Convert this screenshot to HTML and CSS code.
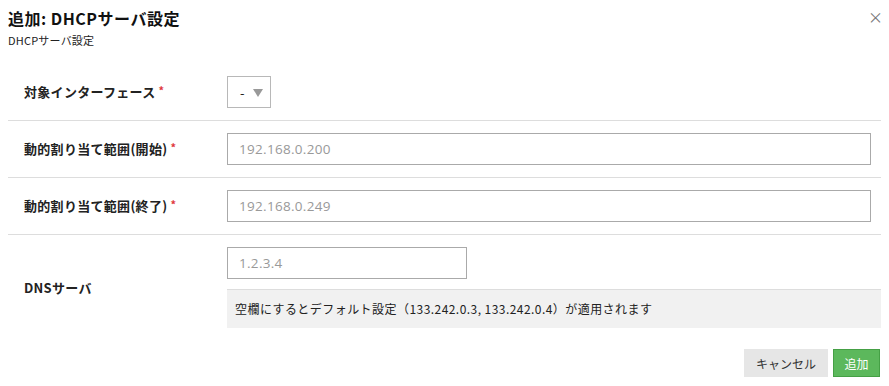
FILE: index.html
```html
<!DOCTYPE html>
<html lang="ja">
<head>
<meta charset="utf-8">
<title>追加: DHCPサーバ設定</title>
<link rel="stylesheet" href="styles.css">
</head>
<body>
<div class="dialog">
  <div class="header">
    <div class="titles">
      <h1 class="title">追加: DHCPサーバ設定</h1>
      <div class="subtitle">DHCPサーバ設定</div>
    </div>
    <span class="close">×</span>
  </div>
  <div class="form">
    <div class="row">
      <div class="label">対象インターフェース<span class="req">*</span></div>
      <div class="field">
        <div class="select"><span class="sel-val">-</span><span class="caret"></span></div>
      </div>
    </div>
    <div class="row">
      <div class="label">動的割り当て範囲(開始)<span class="req">*</span></div>
      <div class="field"><div class="input wide">192.168.0.200</div></div>
    </div>
    <div class="row">
      <div class="label">動的割り当て範囲(終了)<span class="req">*</span></div>
      <div class="field"><div class="input wide">192.168.0.249</div></div>
    </div>
    <div class="row last">
      <div class="label">DNSサーバ</div>
      <div class="field">
        <div class="input short">1.2.3.4</div>
        <div class="hint">空欄にするとデフォルト設定（133.242.0.3, 133.242.0.4）が適用されます</div>
      </div>
    </div>
  </div>
  <div class="footer">
    <button class="btn cancel">キャンセル</button>
    <button class="btn ok">追加</button>
  </div>
</div>
</body>
</html>
```
FILE: styles.css
```css
* { box-sizing: border-box; }
body {
  margin: 8px;
  font-family: "Noto Sans CJK JP", "Noto Sans", sans-serif;
  color: #222;
  background: #fff;
}
.dialog { width: 873px; }
.header {
  display: flex;
  justify-content: space-between;
  align-items: flex-start;
  height: 56px;
}
.title {
  margin: 0;
  font-size: 16px;
  font-weight: bold;
  line-height: 20px;
  letter-spacing: 0.5px;
  color: #111;
}
.subtitle {
  font-size: 11px;
  line-height: 16px;
  margin-top: 4px;
  letter-spacing: 0.2px;
  color: #222;
}
.close {
  font-size: 15px;
  color: #777;
  line-height: 14px;
  margin-top: 2px;
  margin-right: -2px;
}
.row {
  display: flex;
  align-items: center;
  padding: 12px 0;
  border-bottom: 1px solid #ddd;
}
.row.last { border-bottom: none; padding-bottom: 21px; }
.label {
  width: 219px;
  padding-left: 16px;
  font-size: 13px;
  font-weight: bold;
  color: #222;
  line-height: 18px;
  letter-spacing: 0.3px;
}
.req {
  color: #e0393e;
  font-size: 11px;
  margin-left: 3px;
  position: relative;
  top: -2px;
}
.field { flex: 1; }
.select {
  width: 44px;
  height: 32px;
  border: 1px solid #b8b8b8;
  display: flex;
  align-items: center;
  padding-left: 12px;
  font-size: 13px;
}
.sel-val { color: #222; }
.caret {
  width: 0; height: 0;
  margin-left: 8px;
  margin-top: 2px;
  border-left: 5px solid transparent;
  border-right: 5px solid transparent;
  border-top: 8px solid #999;
}
.input {
  height: 32px;
  border: 1px solid #aaa;
  font-size: 13.5px;
  color: #999;
  padding: 0 11px;
  line-height: 30px;
  letter-spacing: 0.3px;
  font-family: "Open Sans", "Noto Sans", sans-serif;
}
.input.wide { width: 644px; }
.input.short { width: 240px; }
.hint {
  margin-top: 10px;
  width: 654px;
  height: 39px;
  background: #f1f1f1;
  border-top: 1px solid #ddd;
  font-size: 12px;
  color: #222;
  padding-left: 8px;
  line-height: 37px;
  letter-spacing: 0.45px;
}
.footer {
  display: flex;
  justify-content: flex-end;
  gap: 5px;
  padding-right: 1px;
}
.btn {
  height: 28px;
  font-family: "Noto Sans CJK JP", sans-serif;
  font-size: 12px;
  border: 1px solid transparent;
  cursor: pointer;
  padding: 0;
}
.cancel { width: 84px; background: #e6e6e6; color: #333; border-color: #e6e6e6; }
.ok { width: 47px; background: #5cb85c; color: #fff; border: 1px solid #45a045; }
```
